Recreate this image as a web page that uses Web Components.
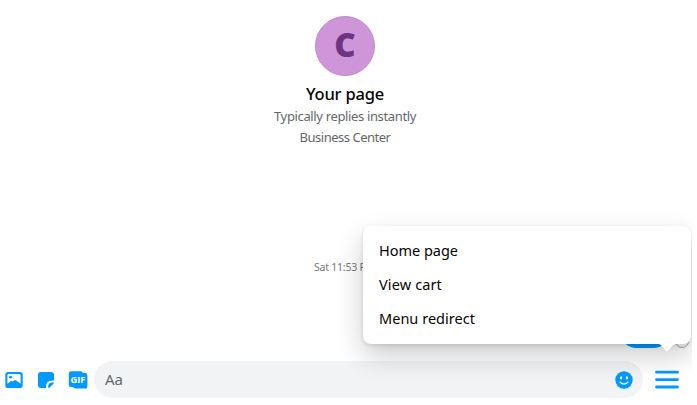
<!DOCTYPE html>
<html lang="en">
<head>
<meta charset="utf-8">
<title>Your page</title>
<style>
body{margin:0;background:#fff;font-family:"Noto Sans","Open Sans",sans-serif}
</style>
</head>
<body>
<chat-window>
  <page-profile slot="profile" letter="C">
    <fit-text slot="name" span="78">Your page</fit-text>
    <fit-text span="142">Typically replies instantly</fit-text>
    <fit-text span="91">Business Center</fit-text>
  </page-profile>
  <message-row slot="messages"><fit-text span="61">Sat 11:53 PM</fit-text></message-row>
  <chat-composer slot="composer">Aa</chat-composer>
  <popup-menu slot="menu">
    <menu-entry><fit-text span="79">Home page</fit-text></menu-entry>
    <menu-entry><fit-text span="63">View cart</fit-text></menu-entry>
    <menu-entry><fit-text span="96">Menu redirect</fit-text></menu-entry>
  </popup-menu>
</chat-window>
<script>
function define(name, html, setup) {
  customElements.define(name, class extends HTMLElement {
    constructor() {
      super();
      this.attachShadow({mode: 'open'}).innerHTML = html;
    }
    connectedCallback() { if (setup) setup(this); }
  });
}

define('chat-window', `<style>
:host{display:flex;flex-direction:column;position:relative;width:692px;height:405px;overflow:hidden;background:#fff}
.feed{height:361px;display:flex;flex-direction:column}
slot[name=menu]::slotted(*){position:absolute;left:363px;top:226px}
</style><div class="feed"><slot name="profile"></slot><slot name="messages"></slot></div><slot name="composer"></slot><slot name="menu"></slot>`);

define('page-profile', `<style>
:host{display:flex;flex-direction:column;align-items:center;width:690px;padding-top:16px;height:232px;box-sizing:border-box;font-size:13px;line-height:21px;color:#65676b}
.avatar{width:60px;height:60px;box-sizing:border-box;border:1px solid #c18acb;border-radius:50%;background:#cf95d9;color:#6c3483;font:800 33px/56px "Open Sans","Noto Sans",sans-serif;text-align:center}
.name{font-size:16.5px;font-weight:500;line-height:24px;color:#050505;margin:6px 0 0}
</style><div class="avatar"></div><div class="name"><slot name="name"></slot></div><slot></slot>`,
  el => { el.shadowRoot.querySelector('.avatar').textContent = el.getAttribute('letter'); });

define('message-row', `<style>
:host{display:block;width:690px}
.time{display:flex;margin-left:314px;padding-top:26px;font-size:10.5px;line-height:18px;color:#78797d}
.line{display:flex;justify-content:flex-end;align-items:flex-end;gap:4px;margin-top:36px}
.bubble{width:52px;height:36px;border-radius:18px;background:#0099ff}
.status{width:14px;height:14px;box-sizing:border-box;border:1px solid #a3a5a9;border-radius:50%;margin-right:1px}
</style><div class="time"><slot></slot></div><div class="line"><div class="bubble"></div><div class="status"></div></div>`);

define('chat-composer', `<style>
:host{display:flex;align-items:center;height:37px;width:692px}
.tools{display:flex;width:94px;height:36px;align-items:center}
.tools svg{flex:none}
.input{flex:none;width:549px;height:37px;border-radius:18.5px;background:#f2f3f5;box-sizing:border-box;padding:0 10px 0 11px;display:flex;align-items:center;justify-content:space-between;font-size:15px;color:#65676b}
.hint{margin-top:-2px}
.more{margin-left:12px}
svg{display:block}
</style><div class="tools">
<svg width="94" height="36" viewBox="0 361 94 36">
<rect x="5.3" y="371" width="17.4" height="16" rx="2.8" fill="#0099ff"/>
<path d="M7.4 374.2Q7.4 373.1 8.5 373.1H19.5Q20.6 373.1 20.6 374.2V382.8L16 379.2Q15.2 378.6 14.4 379.2L12.6 380.6Q11.6 379.6 10.6 380.3L7.4 382.8Z" fill="#fff"/>
<circle cx="10.5" cy="376.2" r="1.4" fill="#0099ff"/>
<path d="M41 371H51Q54 371 54 374V379.4H52.5Q46 379.4 46 385.5V387H41Q38 387 38 384V374Q38 371 41 371Z" fill="#0099ff"/>
<path d="M48.2 387V385.2Q48.2 381.4 52.2 381.4H54Q53.8 382.4 53 383.2L50 386.2Q49.2 386.9 48.2 387Z" fill="#0099ff"/>
<path d="M71.5 370.3H80.5Q82.5 370.3 83 372H85Q87.4 372 87.4 374.4V385Q87.4 387.6 85 387.6H76Q73.7 387.6 73.3 386H71.3Q68.8 386 68.8 383.5V373Q68.8 370.3 71.5 370.3Z" fill="#0099ff"/>
<text x="70.5" y="382.4" textLength="15" lengthAdjust="spacingAndGlyphs" fill="#fff" font-family="Open Sans, sans-serif" font-weight="bold" font-size="9">GIF</text>
</svg></div>
<div class="input"><div class="hint"><slot></slot></div>
<svg width="18" height="18" viewBox="0 0 18 18"><circle cx="9" cy="9" r="8.7" fill="#0099ff"/><ellipse cx="6.1" cy="6.8" rx="1.15" ry="1.6" fill="#fff"/><ellipse cx="11.9" cy="6.8" rx="1.15" ry="1.6" fill="#fff"/><path d="M5.2 11.2Q9 14.9 12.8 11.2" fill="none" stroke="#fff" stroke-width="1.5" stroke-linecap="round"/></svg></div>
<svg class="more" width="24" height="19" viewBox="0 0 24 19"><path d="M1.5 2.2H22.5M1.5 9.6H22.5M1.5 17H22.5" stroke="#0099ff" stroke-width="2.8" stroke-linecap="round"/></svg>`);

define('popup-menu', `<style>
:host{display:block;box-sizing:border-box;width:328px;height:118px;padding:7px 16px 9px;border-radius:8px;background:#fff;box-shadow:0 12px 28px rgba(0,0,0,.2),0 2px 4px rgba(0,0,0,.1)}
.tail{position:absolute;right:12px;top:117px;display:block}
</style><slot></slot><svg class="tail" width="24" height="10" viewBox="0 0 24 10"><path d="M0 0H24Q20 0 17.5 2.5L13 7.8Q12 9 11 7.8L6.5 2.5Q4 0 0 0Z" fill="#fff"/></svg>`);

define('menu-entry', `<style>
:host{display:flex;align-items:center;height:34px;font-size:14.5px;line-height:20px;color:#050505}
</style><slot></slot>`);

/* Spreads a line of text over the width given in its span attribute. */
define('fit-text', `<style>
:host{display:block;white-space:nowrap;width:max-content}
</style><slot></slot>`, el => {
  const n = el.textContent.length;
  el.style.letterSpacing = (Number(el.getAttribute('span')) - el.getBoundingClientRect().width) / n + 'px';
});
</script>
</body>
</html>
